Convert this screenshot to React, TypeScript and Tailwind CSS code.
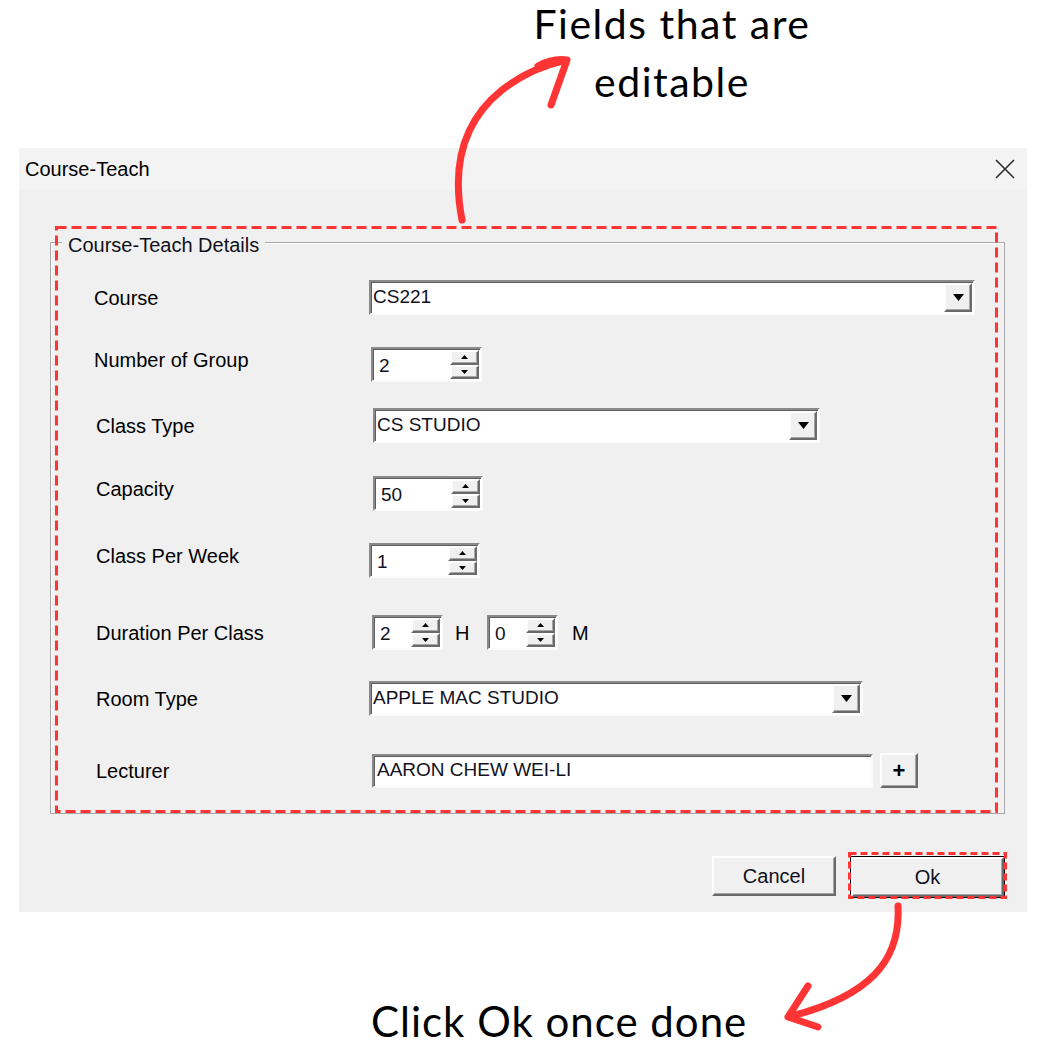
import React from "react";

const sunken =
  "border-2 border-t-[#8a8a8a] border-l-[#8a8a8a] border-r-[#fbfbfb] border-b-[#fbfbfb] bg-white shadow-[inset_1px_1px_0_#5e5e5e]";
const raised =
  "border-2 border-t-[#fdfdfd] border-l-[#fdfdfd] border-r-[#6a6a6a] border-b-[#6a6a6a] bg-[#f0f0f0] shadow-[inset_-1px_-1px_0_#a6a6a6]";

function Combo({ value, className }: { value: string; className: string }) {
  return (
    <div className={`flex h-[35px] ${sunken} ${className}`}>
      <span className="flex flex-1 items-center pl-[2px] text-[19px] text-[#111122]">
        {value}
      </span>
      <span className={`m-[1px] flex w-[28px] items-center justify-center ${raised}`}>
        <svg width="11" height="7" viewBox="0 0 11 7">
          <path d="M0 0 L11 0 L5.5 7 Z" fill="#000" />
        </svg>
      </span>
    </div>
  );
}

function SpinBtn({ up }: { up?: boolean }) {
  return (
    <span className={`flex flex-1 items-center justify-center ${raised}`}>
      <svg width="7" height="4" viewBox="0 0 7 4">
        <path d={up ? "M3.5 0 L7 4 L0 4 Z" : "M0 0 L7 0 L3.5 4 Z"} fill="#000" />
      </svg>
    </span>
  );
}

function Spin({ value, className }: { value: string; className: string }) {
  return (
    <div className={`flex h-[35px] ${sunken} ${className}`}>
      <span className="flex flex-1 items-center pl-[6px] pt-[4px] text-[19px] text-[#111122]">
        {value}
      </span>
      <span className="m-[1px] flex w-[29px] flex-col">
        <SpinBtn up />
        <SpinBtn />
      </span>
    </div>
  );
}

export default function App() {
  return (
    <div className="relative h-[1053px] w-[1054px] overflow-hidden bg-white font-['Liberation_Sans',Arial,sans-serif] text-black">
      {/* top note */}
      <div className="flex h-[148px] w-[1054px] flex-col items-center pl-[290px] font-['Lato',sans-serif] text-[41px] tracking-[1.5px] text-black">
        <div className="leading-[48px]">Fields that are</div>
        <div className="mt-[10px] leading-[48px]">editable</div>
      </div>

      {/* dialog */}
      <div className="ml-[19px] w-[1008px] bg-[#f0f0f0]">
        <div className="flex h-[42px] items-center justify-between bg-[#f3f3f3] pl-[6px] pr-[12px]">
          <span className="text-[20px]">Course-Teach</span>
          <svg width="20" height="20" viewBox="0 0 20 20">
            <path d="M1 1 L19 19 M19 1 L1 19" stroke="#2b2b2b" strokeWidth="1.6" />
          </svg>
        </div>

        <div className="pt-[37px]">
          <fieldset className="ml-[31px] mr-[22px] border border-[#a8a8a8] pb-[25px] shadow-[inset_1px_1px_0_#ffffff]">
            <legend className="ml-[11px] bg-[#f0f0f0] px-[6px] pt-[6px] text-[20px] leading-[24px] text-[#101020]">
              Course-Teach Details
            </legend>

            <div className="mt-[23px] flex h-[35px] items-center">
              <span className="w-[318px] shrink-0 pl-[43px] text-[20px]">Course</span>
              <Combo value="CS221" className="w-[606px]" />
            </div>

            <div className="mt-[32px] flex h-[35px] items-center">
              <span className="-mt-[10px] w-[318px] shrink-0 pl-[43px] text-[20px]">Number of Group</span>
              <Spin value="2" className="ml-[2px] w-[111px]" />
            </div>

            <div className="mt-[26px] flex h-[35px] items-center">
              <span className="w-[318px] shrink-0 pl-[45px] text-[20px]">Class Type</span>
              <Combo value="CS STUDIO" className="ml-[4px] w-[447px]" />
            </div>

            <div className="mt-[33px] flex h-[35px] items-center">
              <span className="-mt-[10px] w-[318px] shrink-0 pl-[45px] text-[20px]">Capacity</span>
              <Spin value="50" className="ml-[4px] w-[110px]" />
            </div>

            <div className="mt-[32px] flex h-[35px] items-center">
              <span className="-mt-[10px] w-[318px] shrink-0 pl-[45px] text-[20px]">Class Per Week</span>
              <Spin value="1" className="w-[111px]" />
            </div>

            <div className="mt-[37px] flex h-[35px] items-center">
              <span className="w-[318px] shrink-0 pl-[45px] text-[20px]">Duration Per Class</span>
              <Spin value="2" className="ml-[3px] w-[71px]" />
              <span className="ml-[12px] w-[32px] text-[20px]">H</span>
              <Spin value="0" className="w-[71px]" />
              <span className="ml-[14px] text-[20px]">M</span>
            </div>

            <div className="mt-[31px] flex h-[35px] items-center">
              <span className="w-[318px] shrink-0 pl-[45px] text-[20px]">Room Type</span>
              <Combo value="APPLE MAC STUDIO" className="w-[494px]" />
            </div>

            <div className="mt-[37px] flex h-[35px] items-center">
              <span className="w-[318px] shrink-0 pl-[45px] text-[20px]">Lecturer</span>
              <div className={`ml-[3px] flex h-[34px] w-[501px] items-center pl-[3px] text-[19px] text-[#111122] ${sunken}`}>
                AARON CHEW WEI-LI
              </div>
              <button className={`ml-[7px] flex h-[35px] w-[38px] items-center justify-center text-[22px] font-bold leading-none ${raised}`}>
                +
              </button>
            </div>
          </fieldset>

          <div className="mt-[42px] flex items-start justify-end gap-[14px] pb-[14px] pr-[22px]">
            <button className={`h-[40px] w-[124px] text-[20px] text-[#101020] ${raised}`}>Cancel</button>
            <div className="h-[42px] w-[155px] border border-black">
              <button className={`h-full w-full text-[20px] text-[#101020] ${raised}`}>Ok</button>
            </div>
          </div>
        </div>
      </div>

      {/* bottom note */}
      <div className="mt-[87px] pl-[371px] font-['Lato',sans-serif] text-[42px] leading-[44px] tracking-[1px]">
        Click Ok once done
      </div>

      {/* annotations */}
      <svg
        className="pointer-events-none absolute left-0 top-0"
        width="1054"
        height="1053"
        viewBox="0 0 1054 1053"
      >
        <rect x="56.5" y="227.5" width="940" height="584" fill="none" stroke="#ff3434" strokeWidth="3" strokeDasharray="10 5" />
        <rect x="849.5" y="853.5" width="156" height="44" fill="none" stroke="#ff3434" strokeWidth="3" strokeDasharray="7 4" />
        <g fill="none" stroke="#ff3434" strokeLinecap="round" strokeLinejoin="round">
          <path d="M462 220 C452 168 462 122 502 90 C524 73 544 65 563 61" strokeWidth="7" />
          <path d="M538 66 Q553 58 567 60 L551 105" strokeWidth="7" />
          <path d="M898 906 C901 962 868 996 792 1016" strokeWidth="7" />
          <path d="M808 986 L788 1017 L818 1027" strokeWidth="7" />
        </g>
      </svg>
    </div>
  );
}
